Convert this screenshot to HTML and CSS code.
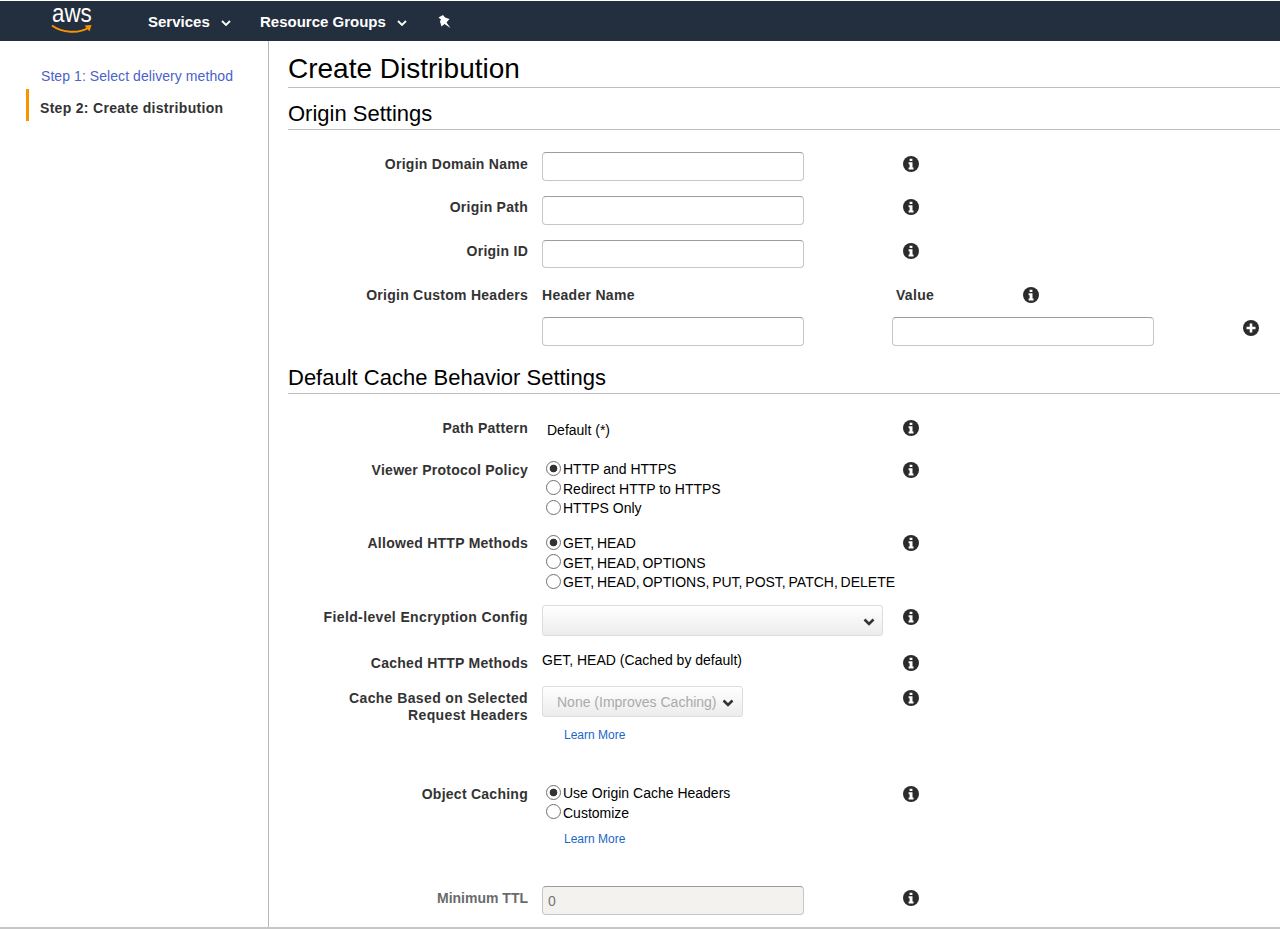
FILE: index.html
```html
<!DOCTYPE html>
<html lang="en">
<head>
<meta charset="utf-8">
<title>Create Distribution</title>
<link rel="stylesheet" href="styles.css">
</head>
<body>
<svg class="defs" width="0" height="0" aria-hidden="true">
  <symbol id="info" viewBox="0 0 16 16">
    <circle cx="8" cy="8" r="8" fill="#2b2b2b"/>
    <path d="M6.600 2.700h2.800v2.400H6.600zM5.600 6.300h3.900v5.300h1v2H5.600v-2h1V8.300h-1z" fill="#fff"/>
  </symbol>
  <symbol id="chev" viewBox="0 0 12 8">
    <path d="M1.500 1.500 6 6l4.500-4.500" fill="none" stroke="currentColor" stroke-width="2.600"/>
  </symbol>
</svg>
<header class="topbar">
  <a class="logo">
    <span class="logo-text">aws</span>
    <svg class="smile" viewBox="0 0 42 12" width="42" height="12"><path d="M1 2.500C11 10 28 11 38 4.500" fill="none" stroke="#f79400" stroke-width="2"/><path d="M33.500 2.500 40.500 2 38.500 8.500" fill="#f79400"/></svg>
  </a>
  <nav class="nav">
    <span class="nav-item nav-services">Services<svg class="nav-chev" viewBox="0 0 10 6" width="10" height="6"><path d="M1 1l4 4 4-4" fill="none" stroke="#fff" stroke-width="1.800"/></svg></span>
    <span class="nav-item nav-groups">Resource Groups<svg class="nav-chev" viewBox="0 0 10 6" width="10" height="6"><path d="M1 1l4 4 4-4" fill="none" stroke="#fff" stroke-width="1.800"/></svg></span>
    <svg class="pin" viewBox="0 0 14 14" width="14" height="14"><path d="M.5 2.500 5 0 7 2.500 11.500 4 8.500 7.500 12.500 13 6.500 9 3.500 11.500 2 6.500 3 4.500z" fill="#fff"/></svg>
  </nav>
</header>
<div class="layout">
  <aside class="sidebar">
    <a class="step step-link">Step 1: Select delivery method</a>
    <div class="step step-active">Step 2: Create distribution</div>
  </aside>
  <main class="main">
    <h1 class="title">Create Distribution</h1>
    <h2 class="section section-origin">Origin Settings</h2>

    <div class="row r-domain"><label class="lbl">Origin Domain Name</label><input class="inp" type="text"><svg class="info"><use href="#info"/></svg></div>
    <div class="row r-path"><label class="lbl">Origin Path</label><input class="inp" type="text"><svg class="info"><use href="#info"/></svg></div>
    <div class="row r-id"><label class="lbl">Origin ID</label><input class="inp inp-short" type="text"><svg class="info"><use href="#info"/></svg></div>
    <div class="headers">
      <div class="lbl">Origin Custom Headers</div>
      <div class="hdr-name">Header Name</div>
      <div class="hdr-value">Value<svg class="info"><use href="#info"/></svg></div>
      <span></span>
      <input class="inp" type="text">
      <input class="inp" type="text">
      <svg class="plus" viewBox="0 0 16 16" width="16" height="16"><circle cx="8" cy="8" r="8" fill="#2b2b2b"/><path d="M6.700 3.500h2.600v3.200h3.200v2.600H9.300v3.200H6.700V9.300H3.500V6.700h3.200z" fill="#fff"/></svg>
    </div>

    <h2 class="section section-cache">Default Cache Behavior Settings</h2>

    <div class="row r-pattern"><label class="lbl">Path Pattern</label><div class="plain indent">Default (*)</div><svg class="info"><use href="#info"/></svg></div>
    <div class="row r-viewer"><label class="lbl">Viewer Protocol Policy</label>
      <div class="radios">
        <div class="radio on">HTTP and HTTPS</div>
        <div class="radio">Redirect HTTP to HTTPS</div>
        <div class="radio">HTTPS Only</div>
      </div><svg class="info"><use href="#info"/></svg></div>
    <div class="row r-allowed"><label class="lbl">Allowed HTTP Methods</label>
      <div class="radios radios-methods">
        <div class="radio on">GET, HEAD</div>
        <div class="radio">GET, HEAD, OPTIONS</div>
        <div class="radio">GET, HEAD, OPTIONS, PUT, POST, PATCH, DELETE</div>
      </div><svg class="info"><use href="#info"/></svg></div>
    <div class="row r-fle"><label class="lbl lbl-wide">Field-level Encryption Config</label>
      <div class="select select-wide"><svg class="chev"><use href="#chev"/></svg></div><svg class="info"><use href="#info"/></svg></div>
    <div class="row r-cached"><label class="lbl">Cached HTTP Methods</label><div class="plain">GET, HEAD (Cached by default)</div><svg class="info"><use href="#info"/></svg></div>
    <div class="row r-based"><label class="lbl lbl-wide">Cache Based on Selected<br>Request Headers</label>
      <div>
        <div class="select select-none">None (Improves Caching)<svg class="chev"><use href="#chev"/></svg></div>
        <a class="more">Learn More</a>
      </div><svg class="info"><use href="#info"/></svg></div>
    <div class="row r-object"><label class="lbl">Object Caching</label>
      <div>
        <div class="radios">
          <div class="radio on">Use Origin Cache Headers</div>
          <div class="radio">Customize</div>
        </div>
        <a class="more more-object">Learn More</a>
      </div><svg class="info"><use href="#info"/></svg></div>
    <div class="row r-ttl"><label class="lbl lbl-dim">Minimum TTL</label><input class="inp inp-off" type="text" value="0" disabled><svg class="info"><use href="#info"/></svg></div>
  </main>
</div>
</body>
</html>
```

FILE: styles.css
```css
* { box-sizing: border-box; }
html, body { margin: 0; height: 929px; overflow: hidden; }
body { background: #fff; color: #000; font: 14px/19px "Liberation Sans", Arial, sans-serif; display: flex; flex-direction: column; }
.defs { position: absolute; }

.topbar { height: 40px; margin-top: 1px; background: #232f3e; display: flex; align-items: center; flex: none; }
.logo { width: 148px; padding-left: 51px; height: 40px; display: flex; flex-direction: column; }
.logo-text { color: #fff; font-size: 26px; line-height: 20px; margin-top: 2px; margin-left: 1px; transform: scaleX(.86); transform-origin: left center; }
.smile { margin-top: 0; }
.nav { display: flex; align-items: center; color: #fff; font-weight: bold; font-size: 15px; padding-top: 1px; }
.nav-item { display: flex; align-items: center; }
.nav-chev { margin-left: 11px; margin-top: 2px; }
.nav-services { width: 112px; }
.nav-groups { width: 178px; }
.pin { margin-top: 0; }

.layout { flex: 1; display: flex; border-bottom: 2px solid #c6c6c6; min-height: 0; }
.sidebar { width: 269px; flex: none; border-right: 1px solid #b9b9b9; padding: 25px 0 0 26px; }
.step { display: block; }
.step-link { color: #4a62c9; height: 23px; padding: 1px 0 0 15px; line-height: 19px; letter-spacing: .07px; }
.step-active { border-left: 3px solid #f79400; font-weight: bold; color: #333; padding: 10px 0 0 11px; height: 32px; line-height: 19px; letter-spacing: .31px; }

.main { flex: 1; padding-left: 19px; min-width: 0; }
.title { font-size: 28px; font-weight: normal; line-height: 32px; margin: 12px 0 0; padding-bottom: 2px; border-bottom: 1px solid #bdbdbd; }
.section { font-size: 22px; font-weight: normal; line-height: 26px; margin: 0; padding-bottom: 2px; border-bottom: 1px solid #bdbdbd; }
.section-origin { margin-top: 13px; }
.section-cache { margin-top: 19px; }

.row { display: grid; grid-template-columns: 240px 361px 16px; column-gap: 14px; }
.row > .info { margin-left: -14px; }
.lbl { display: block; text-align: right; font-weight: bold; color: #333; letter-spacing: .26px; line-height: 17px; }
.lbl-wide { letter-spacing: .37px; }
.lbl-dim { color: #6b6b6b; letter-spacing: 0; }
.info { width: 16px; height: 16px; display: block; }

.inp { display: block; width: 262px; height: 29px; border: 1px solid #c6c6c6; border-top-color: #9c9c9c; border-radius: 4px; background: #fff; padding: 0 5px; font: inherit; }
.inp-short { height: 28px; }
.inp-off { background: #f3f2ef; color: #777; }

.r-domain { margin-top: 22px; height: 44px; }
.r-path { height: 44px; }
.r-id { height: 44px; }
.r-domain .lbl, .r-domain .info { margin-top: 4px; }
.r-path .lbl, .r-path .info { margin-top: 3px; }
.r-id .lbl, .r-id .info { margin-top: 3px; }

.headers { display: grid; grid-template-columns: 240px 350px 262px 81px 16px; grid-template-rows: 17px auto; height: 62px; padding-top: 3px; }
.headers .lbl { grid-column: 1; }
.hdr-name { grid-column: 2; padding-left: 14px; font-weight: bold; color: #333; letter-spacing: .3px; line-height: 17px; }
.hdr-value { grid-column: 3 / span 2; padding-left: 18px; font-weight: bold; color: #333; letter-spacing: .3px; line-height: 17px; display: flex; }
.hdr-value .info { margin-left: 89px; }
.headers .inp:nth-of-type(1) { grid-column: 2; grid-row: 2; margin: 13px 0 0 14px; }
.headers .inp:nth-of-type(2) { grid-column: 3; grid-row: 2; margin: 13px 0 0 14px; }
.plus { grid-column: 5; grid-row: 2; margin: 16px 0 0 22px; }
.headers > span { grid-row: 2; grid-column: 1; }

.plain { line-height: 19px; }
.indent { padding-left: 5px; margin-top: 1px; }
.radios { padding-left: 5px; margin-top: -2px; }
.radios-methods { margin-top: -1px; word-spacing: -1.100px; }
.radio { display: flex; align-items: center; height: 19.500px; white-space: nowrap; }
.radio::before { content: ""; width: 13px; height: 13px; margin: -3px 2px 0 -1px; flex: none; border: 1px solid #6f6f6f; border-radius: 50%; background: #fff; }
.radio.on::before { background: radial-gradient(circle, #333 0 3.500px, #fff 4.200px); }

.r-pattern { margin-top: 26px; height: 42px; }
.r-viewer { height: 73px; }
.r-allowed { height: 74px; }
.r-fle { height: 46px; }
.r-cached { height: 35px; }
.r-based { height: 96px; }
.r-object { height: 100px; }
.r-ttl { height: 40px; }
.r-cached .plain { margin-top: -4px; }

.select { height: 31px; border: 1px solid #dcdcdc; border-radius: 3px; background: linear-gradient(#fff, #ececec); display: flex; align-items: center; justify-content: flex-end; color: #aaa; }
.select-wide { width: 341px; margin-top: -4px; padding-right: 7px; }
.select-none { width: 201px; padding: 2px 7px 0 14px; justify-content: flex-start; white-space: nowrap; margin-top: -4px; }
.chev { width: 12px; height: 8px; color: #333; display: block; margin-top: 2px; flex: none; }
.select-none .chev { margin-left: 5px; margin-top: 0; }

.more { display: block; color: #1a66c9; font-size: 12px; line-height: 16px; padding-left: 22px; margin-top: 10px; }
.more-object { margin-top: 8px; }
.r-ttl .lbl { margin-top: 4px; }
.r-ttl .info { margin-top: 4px; }
```
